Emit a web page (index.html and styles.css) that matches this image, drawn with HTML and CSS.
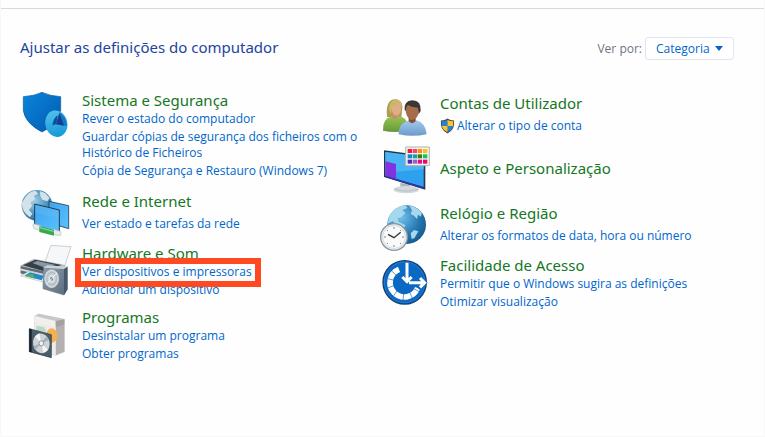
FILE: index.html
```html
<!DOCTYPE html>
<html lang="pt">
<head>
  <meta charset="UTF-8">
  <meta name="viewport" content="width=device-width, initial-scale=1.0">
  <title>Painel de Controlo</title>
  <link rel="stylesheet" href="styles.css">
</head>
<body>
<div class="toolbar-edge"></div>
<main class="panel">
  <header class="panel-header">
    <h1>Ajustar as definições do computador</h1>
    <div class="view-by">
      <label for="view">Ver por:</label>
      <div class="select-wrap">
        <select id="view">
          <option selected>Categoria</option>
          <option>Ícones grandes</option>
          <option>Ícones pequenos</option>
        </select>
        <svg class="arrow" viewBox="0 0 8 5"><path d="M0 0h8L4 5z" fill="#0066cc"/></svg>
      </div>
    </div>
  </header>

  <div class="columns">
    <div class="column">
      <section class="category">
        <svg class="icon" viewBox="30 30 150 138">
          <defs>
            <linearGradient id="shield" x1="0" y1="0" x2="1" y2="1"><stop offset="0" stop-color="#0a85dc"/><stop offset="1" stop-color="#0359b0"/></linearGradient>
            <linearGradient id="disc" x1="0" y1="0" x2="0" y2="1"><stop offset="0" stop-color="#4fc0ea"/><stop offset="1" stop-color="#1599d8"/></linearGradient>
          </defs>
          <path d="M40 50Q73 48 96 37Q119 48 152 50V92Q147 130 96 156Q46 130 40 92Z" fill="url(#shield)" stroke="#0b579a" stroke-width="2"/>
          <ellipse cx="139" cy="131" rx="33" ry="40" fill="url(#disc)" transform="rotate(-12 139 131)"/>
          <path d="M139 133L149 97Q168 108 171 138Z" fill="#1478c4"/>
          <path d="M138 133L148 99L162 137Z" fill="#173f91"/>
          <path d="M139 132L127 136Q131 113 143 106Z" fill="#07509e"/>
        </svg>
        <div class="info">
          <h2>Sistema e Segurança</h2>
          <ul>
            <li><a href="#">Rever o estado do computador</a></li>
            <li><a href="#">Guardar cópias de segurança dos ficheiros com o Histórico de Ficheiros</a></li>
            <li><a href="#">Cópia de Segurança e Restauro (Windows 7)</a></li>
          </ul>
        </div>
      </section>

      <section class="category single">
        <svg class="icon" viewBox="30 21 150 138">
          <defs>
            <radialGradient id="globe" cx=".4" cy=".35" r=".7"><stop offset="0" stop-color="#a3cfe6"/><stop offset=".6" stop-color="#4c94be"/><stop offset="1" stop-color="#2a6590"/></radialGradient>
            <linearGradient id="screen" x1="0" y1="0" x2="1" y2="1"><stop offset="0" stop-color="#3fa3ee"/><stop offset="1" stop-color="#58c2ff"/></linearGradient>
          </defs>
          <circle cx="81" cy="73" r="46" fill="url(#globe)"/>
          <path d="M41 58Q52 33 76 29L84 38L71 45L76 53L62 64L66 75L57 87L67 98L60 109Q34 91 36 65ZM90 31L105 36L119 50L112 61L97 56L91 46ZM54 55L62 43L71 41Z" fill="#d5e3e9"/>
          <path d="M117 61L176 74V143L117 125Z" fill="url(#screen)" stroke="#263e4f" stroke-width="2.500"/>
          <path d="M74 69L148 87V156L74 133Z" fill="url(#screen)" stroke="#243b4c" stroke-width="3"/>
          <path d="M76 71L146 89V112L76 96Z" fill="#6bbef4" opacity=".35"/>
          <path d="M70 128L92 134V149L72 143Q67 135 70 128ZM129 145L151 151Q156 157 151 164L128 160Z" fill="#e8ecea" stroke="#b5bdb9" stroke-width="2"/>
          <path d="M88 136L132 147V164L88 153Z" fill="#37a84b"/>
          <path d="M89 140L131 151" stroke="#7ed68b" stroke-width="4"/>
        </svg>
        <div class="info">
          <h2>Rede e Internet</h2>
          <ul>
            <li><a href="#">Ver estado e tarefas da rede</a></li>
          </ul>
        </div>
      </section>

      <section class="category">
        <svg class="icon" viewBox="30 21 150 138">
          <defs>
            <linearGradient id="speaker" x1="0" y1="0" x2="1" y2="1"><stop offset="0" stop-color="#8c9cab"/><stop offset="1" stop-color="#586a7b"/></linearGradient>
            <radialGradient id="cone"><stop offset="0" stop-color="#8d989f"/><stop offset=".25" stop-color="#e8ecee"/><stop offset=".7" stop-color="#b1bcc3"/><stop offset="1" stop-color="#e4e9ec"/></radialGradient>
          </defs>
          <path d="M123 28L183 32L164 91L105 78Z" fill="#f6f7f8" stroke="#b6bbc0" stroke-width="2"/>
          <path d="M32 88L72 68L166 87V113L102 135L32 115Z" fill="#b7bfc5"/>
          <path d="M38 88L76 71L155 87L99 105Z" fill="#353f48"/>
          <path d="M67 81L82 75L137 87L108 96Z" fill="#8798a4"/>
          <path d="M32 90L99 106V125L32 112Z" fill="#5f6a73"/>
          <path d="M31 100L99 116" stroke="#d9dee1" stroke-width="5"/>
          <path d="M32 120L57 106L108 117L102 139Z" fill="#eef2f4" stroke="#a5afb5" stroke-width="1.500"/>
          <path d="M43 119L60 109L102 119L95 133Z" fill="#2488ca"/>
          <path d="M43 119L68 113L75 128Z" fill="#58af59"/>
          <path d="M101 95L164 98L172 92V160L162 177L99 158Z" fill="url(#speaker)" stroke="#6b7b89" stroke-width="2"/>
          <path d="M99 95L112 88L172 92L164 99Z" fill="#cad2d8"/>
          <path d="M162 99L172 93V160L162 177Z" fill="#475969"/>
          <ellipse cx="125" cy="128" rx="21" ry="27" fill="url(#cone)" stroke="#d0d8dd" stroke-width="2"/>
          <ellipse cx="125" cy="128" rx="5" ry="6" fill="#7d8990"/>
          <path d="M125 128L141 111M125 128L109 145" stroke="#f5f7f8" stroke-width="3"/>
        </svg>
        <div class="info">
          <h2>Hardware e Som</h2>
          <ul>
            <li><a class="highlight" href="#">Ver dispositivos e impressoras</a></li>
            <li><a href="#">Adicionar um dispositivo</a></li>
          </ul>
        </div>
      </section>

      <section class="category">
        <svg class="icon" viewBox="30 15 150 138">
          <path d="M74 42L87 36L163 52V149L137 160L75 139Z" fill="#dfdddc" stroke="#c4c1c0" stroke-width="1.500"/>
          <path d="M137 64L163 53V149L137 160Z" fill="#b4b0af"/>
          <path d="M75 55L137 69V160L75 142Z" fill="#eeeceb"/>
          <path d="M75 41L87 36L163 52L137 64Z" fill="#c9c6c5"/>
          <path d="M74 42L137 57V76L74 61Z" fill="#f2f0ef"/>
          <path d="M137 57L163 52V67L137 76Z" fill="#a5a1a0"/>
          <path d="M79 71L103 75L110 94L95 99L79 92Z" fill="#b8dbc5"/>
          <ellipse cx="125" cy="101" rx="17" ry="22" fill="#f3b24e"/>
          <path d="M58 80L124 98V167L58 149Z" fill="#4d5c69" stroke="#283540" stroke-width="2"/>
          <path d="M58 80L65 82V151L58 149Z" fill="#16212a"/>
          <ellipse cx="94" cy="124" rx="25" ry="30" fill="#cdd3d7" transform="rotate(-12 94 124)"/>
          <path d="M94 124L75 103L88 94ZM94 124L114 144L100 152Z" fill="#f4f7f8"/>
          <path d="M94 124L110 102L117 114ZM94 124L75 145L71 132Z" fill="#a7b0b6"/>
          <ellipse cx="94" cy="124" rx="7" ry="8" fill="#eef1f2" stroke="#65727b" stroke-width="2"/>
        </svg>
        <div class="info">
          <h2>Programas</h2>
          <ul>
            <li><a href="#">Desinstalar um programa</a></li>
            <li><a href="#">Obter programas</a></li>
          </ul>
        </div>
      </section>
    </div>

    <div class="column">
      <section class="category single">
        <svg class="icon" viewBox="9 15 150 138">
          <defs>
            <linearGradient id="green" x1="0" y1="0" x2="0" y2="1"><stop offset="0" stop-color="#97c454"/><stop offset="1" stop-color="#669839"/></linearGradient>
            <linearGradient id="blue" x1="0" y1="0" x2="0" y2="1"><stop offset="0" stop-color="#a3c9ec"/><stop offset="1" stop-color="#6b9bcc"/></linearGradient>
          </defs>
          <path d="M36 96Q31 49 56 43Q80 41 82 67L79 98Z" fill="#b29a53"/>
          <path d="M24 137Q22 102 49 94L73 94Q90 98 95 110V138Q55 145 24 137Z" fill="url(#green)"/>
          <path d="M52 84H69V97Q61 108 52 98Z" fill="#c98f68"/>
          <path d="M48 63Q63 62 70 50Q81 57 78 78Q74 92 63 92Q51 89 48 63Z" fill="#e0ad86"/>
          <path d="M42 73Q44 44 65 43Q83 48 82 69Q74 61 70 51Q64 65 51 67L48 87Z" fill="#cbb66a"/>
          <path d="M71 148Q69 117 98 107L125 106Q151 113 155 148Q112 157 71 148Z" fill="url(#blue)"/>
          <path d="M101 96H122V109Q111 120 101 109Z" fill="#815032"/>
          <path d="M91 68Q92 49 111 49Q132 50 132 72Q131 104 110 105Q93 101 91 68Z" fill="#a56d49"/>
          <path d="M89 76Q86 47 112 46Q139 46 137 78L131 88L129 68Q108 66 99 60Q93 64 92 78Z" fill="#3c3637"/>
        </svg>
        <div class="info">
          <h2>Contas de Utilizador</h2>
          <ul>
            <li class="with-shield">
              <svg class="uac" viewBox="0 0 16 16">
                <path d="M8 0Q11 2 15 2V7Q14 13 8 16Q2 13 1 7V2Q5 2 8 0Z" fill="#4b4f50"/>
                <path d="M8 1.500V8H2V3Q5 3 8 1.500ZM8 8H14Q13 12 8 14.500Z" fill="#2184d9"/>
                <path d="M8 1.500Q11 3 14 3V8H8ZM2 8H8V14.500Q3 12 2 8Z" fill="#fec52b"/>
              </svg>
              <a href="#">Alterar o tipo de conta</a>
            </li>
          </ul>
        </div>
      </section>

      <section class="category">
        <svg class="icon" viewBox="9 15 150 138">
          <path d="M76 128L105 134V151L76 145Z" fill="#aeb6bc"/>
          <ellipse cx="94" cy="149" rx="38" ry="11" fill="#d3d8db"/>
          <path d="M59 147Q89 159 128 148" stroke="#a6afb5" stroke-width="2" fill="none"/>
          <path d="M27 31L151 47V149L27 111Z" fill="#263847"/>
          <path d="M31 36L146 51V141L31 107Z" fill="#2da1ee"/>
          <path d="M31 36L146 51V88L31 98Z" fill="#48b4f4"/>
          <path d="M31 64L63 72V117L31 107Z" fill="#8133df"/>
          <path d="M31 107L146 141V146L31 111Z" fill="#3531b6"/>
          <path d="M92 21H163V77H92Z" fill="#f3f3f2" stroke="#b5b1ae" stroke-width="3"/>
          <path d="M98 27h13v12h-13z" fill="#f01c36"/><path d="M113 27h13v12h-13z" fill="#ff435e"/><path d="M128 27h13v12h-13z" fill="#ff8c18"/><path d="M144 27h13v12h-13z" fill="#ffc20d"/>
          <path d="M98 43h13v12h-13z" fill="#1384cf"/><path d="M113 43h13v12h-13z" fill="#08a5b5"/><path d="M128 43h13v12h-13z" fill="#388000"/><path d="M144 43h13v12h-13z" fill="#0fc66d"/>
          <path d="M98 59h13v12h-13z" fill="#4f28b7"/><path d="M113 59h13v12h-13z" fill="#9664bd"/><path d="M128 59h13v12h-13z" fill="#e90a8d"/><path d="M144 59h13v12h-13z" fill="#f10562"/>
        </svg>
        <div class="info">
          <h2>Aspeto e Personalização</h2>
        </div>
      </section>

      <section class="category single">
        <svg class="icon" viewBox="9 15 150 138">
          <defs>
            <radialGradient id="earth" cx=".35" cy=".3" r=".8"><stop offset="0" stop-color="#72c3ec"/><stop offset=".6" stop-color="#2777b3"/><stop offset="1" stop-color="#145588"/></radialGradient>
          </defs>
          <circle cx="95" cy="89" r="58" fill="url(#earth)"/>
          <path d="M43 64Q59 34 90 31L98 39L82 45L91 55L76 68L68 69L71 80L92 91L83 103L65 89L53 79L38 86ZM103 32Q125 35 140 53L138 65L129 59L126 72L117 62L107 57L111 46ZM107 115L117 105L130 109L118 130L110 132Z" fill="#a5d8ed"/>
          <circle cx="57" cy="126" r="40" fill="#edf0f1" stroke="#89979e" stroke-width="4"/>
          <circle cx="57" cy="126" r="34" fill="#fafafa" stroke="#c5ccd0" stroke-width="2"/>
          <path d="M57 96V102M57 150V156M27 126H33M81 126H87M36 105L39 108M75 144L78 147M36 147L39 144M75 108L78 105" stroke="#7d878c" stroke-width="3"/>
          <path d="M39 118L57 128L77 112" fill="none" stroke="#30383d" stroke-width="4"/>
        </svg>
        <div class="info">
          <h2>Relógio e Região</h2>
          <ul>
            <li><a href="#">Alterar os formatos de data, hora ou número</a></li>
          </ul>
        </div>
      </section>

      <section class="category">
        <svg class="icon" viewBox="9 9 150 138">
          <circle cx="89" cy="91" r="65" fill="#0b68c3" stroke="#123f75" stroke-width="4"/>
          <circle cx="89" cy="91" r="61" fill="none" stroke="#2584d6" stroke-width="2"/>
          <path d="M72 52A43 43 0 1 0 128 108" fill="none" stroke="#fff" stroke-width="17"/>
          <path d="M49 56L64 70M38 80L58 85M38 108L56 101M56 131L68 114M84 145L86 124M112 138L103 119M134 120L113 108" stroke="#1765b5" stroke-width="2"/>
          <path d="M96 32V84M77 70L96 90L115 70" fill="none" stroke="#0b68c3" stroke-width="14"/>
          <path d="M91 92H145M130 75L148 92L130 109" fill="none" stroke="#0b68c3" stroke-width="14"/>
          <path d="M96 32V86M82 75L96 89L110 75M102 92H147M135 78L149 92L135 106" fill="none" stroke="#fff" stroke-width="9"/>
        </svg>
        <div class="info">
          <h2>Facilidade de Acesso</h2>
          <ul>
            <li><a href="#">Permitir que o Windows sugira as definições</a></li>
            <li><a href="#">Otimizar visualização</a></li>
          </ul>
        </div>
      </section>
    </div>
  </div>
</main>
</body>
</html>
```
FILE: styles.css
```css
* {
  margin: 0;
  padding: 0;
  box-sizing: border-box;
  font-family: 'Open Sans', 'Noto Sans', sans-serif;
}

body {
  background-color: #fefefe;
  min-height: 100vh;
  border: 1px solid #f8f8f8;
  border-top: none;
}

.toolbar-edge {
  height: 9px;
  border-bottom: 1px solid #d9d9d9;
}

.panel {
  padding: 28px 30px 20px 19px;
}

.panel-header {
  display: flex;
  justify-content: space-between;
  align-items: flex-start;
  margin-bottom: 30px;
}

h1,
h2 {
  font-family: 'Noto Sans', 'Open Sans', sans-serif;
  font-size: 15px;
  line-height: 20px;
  font-weight: 400;
}

h1 {
  color: #1d449e;
}

h2 {
  color: #15771f;
}

.view-by {
  display: flex;
  align-items: center;
  gap: 3px;
  font-size: 12px;
  color: #6f7585;
}

.select-wrap {
  position: relative;
}

select {
  appearance: none;
  display: block;
  width: 89px;
  height: 23px;
  padding: 0 20px 0 10px;
  border: 1px solid #e2e5f0;
  border-radius: 3px;
  background-color: #fff;
  color: #0066cc;
  font-size: 12px;
}

.arrow {
  position: absolute;
  right: 11px;
  top: 9px;
  width: 8px;
  height: 5px;
  pointer-events: none;
}

.columns {
  display: grid;
  grid-template-columns: 358fr 356fr;
}

.column {
  display: flex;
  flex-direction: column;
  gap: 9px;
}

.category {
  display: flex;
  align-items: center;
  gap: 12px;
  min-height: 46px;
}

.icon {
  flex: none;
  align-self: flex-start;
  width: 50px;
  height: 46px;
  overflow: visible;
}

ul {
  display: flex;
  flex-direction: column;
  gap: 2px;
  margin-top: 1px;
  list-style: none;
}

.single ul {
  margin-top: 5px;
}

li {
  font-size: 12px;
  line-height: 16px;
}

a {
  color: #0066cc;
  text-decoration: none;
}

a:hover {
  text-decoration: underline;
}

.with-shield {
  display: flex;
  align-items: center;
  gap: 2px;
}

.uac {
  width: 15px;
  height: 16px;
}

.highlight {
  position: relative;
}

.highlight::after {
  content: '';
  position: absolute;
  inset: -5px -9px -7px -7px;
  border: 6px solid #ff4a21;
  pointer-events: none;
}
```
